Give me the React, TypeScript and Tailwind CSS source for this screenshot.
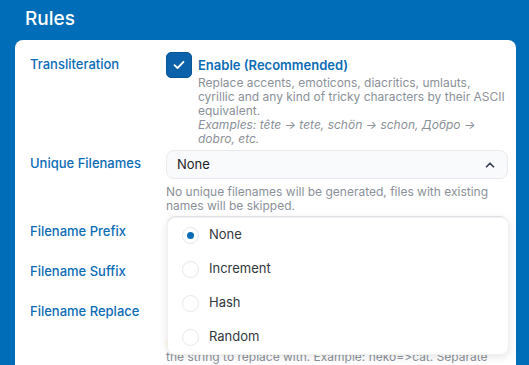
import { ChevronUp } from "lucide-react";

const options = ["None", "Increment", "Hash", "Random"];

function Label({ children, pad }: { children: string; pad: string }) {
  return (
    <div className={`w-[136px] shrink-0 text-[13px] leading-[18px] font-medium text-[#0b6cb6] ${pad}`}>
      {children}
    </div>
  );
}

function TextInput() {
  return <div className="ml-[1px] h-[30px] rounded-lg border border-[#e5e7eb] bg-[#f9fafb]" />;
}

export default function App() {
  return (
    <div className="h-[365px] overflow-hidden bg-[#006db8] font-['Inter',sans-serif]">
      {/* Header */}
      <div className="h-[40px] pl-[25px] pt-[7px] text-[19px] font-medium leading-[24px] text-white">Rules</div>

      {/* Card */}
      <div className="ml-[15px] mr-[13px] rounded-t-lg bg-white pl-[15px] pr-2 pt-3">
        {/* Transliteration */}
        <div className="flex">
          <Label pad="pt-[3px]">Transliteration</Label>
          <div className="flex gap-[6px]">
            <div className="flex h-[26px] w-[26px] shrink-0 items-center justify-center rounded-[5px] border border-[#0a5596] bg-[#0b62ab]">
              <svg width="12" height="10" viewBox="0 0 12 10" fill="none">
                <path d="M1.5 5.2L4.5 8L10.5 1.8" stroke="white" strokeWidth="1.8" strokeLinecap="round" strokeLinejoin="round" />
              </svg>
            </div>
            <div className="pt-[4px]">
              <div className="text-[13px] font-semibold leading-[18px] text-[#0b6cb6]">Enable (Recommended)</div>
              <p className="mt-[2px] text-[12px] leading-[14px] text-[#8b9199]">
                Replace accents, emoticons, diacritics, umlauts, cyrillic and any kind of tricky characters by their ASCII equivalent.
                <br />
                <i>Examples: tête → tete, schön → schon, Добро → dobro, etc.</i>
              </p>
            </div>
          </div>
        </div>

        {/* Unique Filenames */}
        <div className="mt-[4px] flex">
          <Label pad="pt-[4px]">Unique Filenames</Label>
          <div className="relative flex-1">
            <div className="flex h-[29px] items-center justify-between rounded-lg border border-[#e8eaed] bg-[#f9fafb] pl-[10px] pr-[10px] text-[13px] text-[#1f2328]">
              <span>None</span>
              <ChevronUp size={14} strokeWidth={3} className="text-[#374151]" />
            </div>
            <p className="mt-[6px] text-[12px] leading-[14px] text-[#8b9199]">
              No unique filenames will be generated, files with existing names will be skipped.
            </p>

            {/* Open dropdown */}
            <div className="absolute left-[1px] right-[-1px] top-[67px] z-10 rounded-lg border border-[#eef0f2] bg-white shadow-[0_2px_10px_rgba(0,0,0,0.1)]">
              {options.map((o, i) => (
                <div key={o} className="flex h-[34px] items-center gap-[10px] pl-[14px] text-[13px] text-[#33383e]">
                  <span className="flex h-[17px] w-[17px] items-center justify-center rounded-full border border-[#e3e7ec] bg-white">
                    {i === 0 && <span className="h-[7px] w-[7px] rounded-full bg-[#0b6cb6]" />}
                  </span>
                  {o}
                </div>
              ))}
            </div>
          </div>
        </div>

        {/* Filename Prefix */}
        <div className="mt-[3px] flex">
          <Label pad="pt-[6px]">Filename Prefix</Label>
          <div className="flex-1">
            <TextInput />
          </div>
        </div>

        {/* Filename Suffix */}
        <div className="mt-[10px] flex">
          <Label pad="pt-[6px]">Filename Suffix</Label>
          <div className="flex-1">
            <TextInput />
          </div>
        </div>

        {/* Filename Replace */}
        <div className="mt-[10px] flex pb-6">
          <Label pad="pt-[6px]">Filename Replace</Label>
          <div className="flex-1">
            <TextInput />
            <p className="mt-[10px] text-[12px] leading-[14px] text-[#8b9199] [font-feature-settings:'calt'_0,'liga'_0]">
              Replace a part of the filename. Use =&gt; to separate
              <br />
              the string to replace with. Example: neko=&gt;cat. Separate
            </p>
          </div>
        </div>
      </div>
    </div>
  );
}
